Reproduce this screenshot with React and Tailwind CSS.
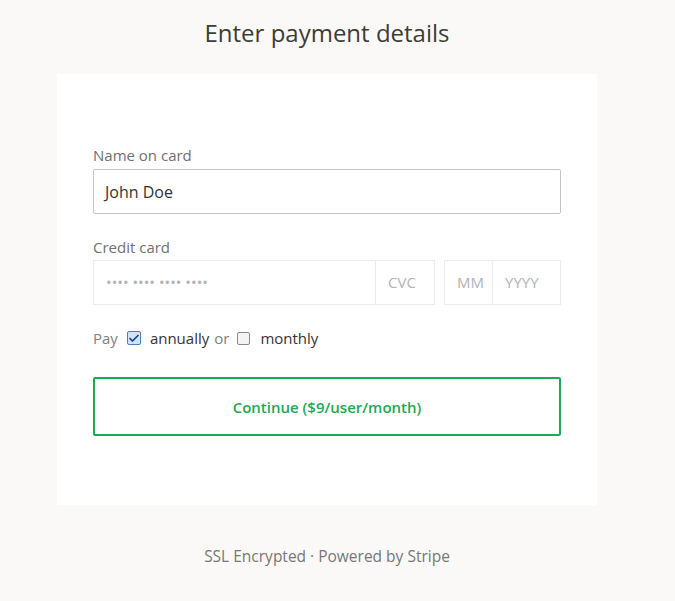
import { Check } from 'lucide-react';

const Field = ({ placeholder, className }) => (
  <div
    className={`flex h-[45px] items-center border border-[#ebebeb] px-[12px] text-[15px] text-[#b3b3b3] ${className}`}
  >
    {placeholder}
  </div>
);

export default function App() {
  return (
    <div className="min-h-[601px] bg-[#faf9f7] font-['Open_Sans',sans-serif]">
      <div className="ml-[57px] w-[540px]">
        <h1 className="pt-[17px] text-center text-[24px] leading-[32px] text-[#3d3d36]">Enter payment details</h1>

        <div className="mt-[25px] bg-white px-[36px] pb-[69px] pt-[70px]">
          <label className="block text-[15px] leading-[22px] text-[#707070]">Name on card</label>
          <div className="mt-[3px] flex h-[45px] items-center rounded-[2px] border border-[#c4c4c4] px-[11px] text-[16px] text-[#333]">
            John Doe
          </div>

          <label className="mt-[22px] block text-[15px] leading-[22px] text-[#707070]">Credit card</label>
          <div className="mt-[2px] flex">
            <Field placeholder="•••• •••• •••• ••••" className="w-[283px] text-[11px] text-[#b0b0b0]" />
            <Field placeholder="CVC" className="w-[59px] border-l-0" />
            <Field placeholder="MM" className="ml-[9px] w-[49px]" />
            <Field placeholder="YYYY" className="w-[68px] border-l-0" />
          </div>

          <div className="mt-[22px] flex items-center text-[15px] leading-[22px]">
            <span className="text-[#808080]">Pay</span>
            <span className="ml-[9px] flex h-[14px] w-[14px] items-center justify-center rounded-[2px] border border-[#4a7fbf] bg-[#cfe3fb]">
              <Check size={13} strokeWidth={3.5} className="text-[#1d3f7a]" />
            </span>
            <span className="ml-[9px] text-[#333]">annually</span>
            <span className="ml-[5px] text-[#808080]">or</span>
            <span className="ml-[8px] h-[13px] w-[13px] rounded-[2px] border border-[#8a8a8a] bg-[#f4f4f4]" />
            <span className="ml-[10px] text-[#333]">monthly</span>
          </div>

          <button className="mt-[28px] flex h-[59px] w-full items-center justify-center rounded-[2px] border-2 border-[#1fa855] pt-[2px] text-[15px] font-semibold text-[#1fa855]">
            Continue ($9/user/month)
          </button>
        </div>

        <p className="mt-[40px] text-center text-[15.5px] text-[#777]">SSL Encrypted · Powered by Stripe</p>
      </div>
    </div>
  );
}
